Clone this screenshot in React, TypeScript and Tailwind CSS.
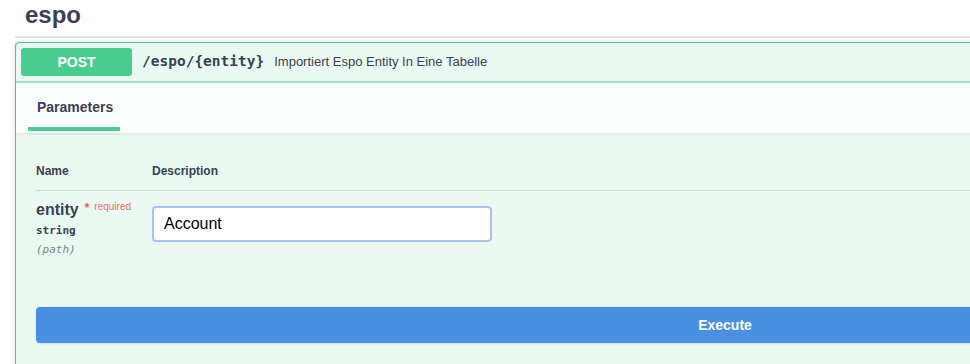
import React from "react";

const sans = { fontFamily: '"Liberation Sans", Arial, sans-serif' };

function ParamRow() {
  return (
    <div className="flex">
      <div className="w-[116px] pt-[9px]">
        <div className="flex items-start text-[#3b4151]">
          <span className="text-[16px] leading-[20px] font-bold">entity</span>
          <span className="ml-[6px] text-[12px] leading-[12px] text-[#f35b5b] font-bold mt-[2px]">*</span>
          <span className="ml-[5px] text-[10px] leading-[12px] text-[#f26a6a] mt-[1px]">required</span>
        </div>
        <div className="mt-[2px] text-[11px] leading-[18px] font-bold text-[#3b4151] font-['DejaVu_Sans_Mono',monospace]">
          string
        </div>
        <div className="mt-[1px] text-[11px] leading-[18px] italic text-[#808080] font-['DejaVu_Sans_Mono',monospace]">
          (path)
        </div>
      </div>
      <div className="pt-[15px]">
        <input
          defaultValue="Account"
          className="w-[340px] h-[36px] px-[10px] bg-white text-black text-[16px] rounded-[4px] border-2 border-[#a8c3f1] outline-none"
          style={sans}
        />
      </div>
    </div>
  );
}

export default function App() {
  return (
    <div className="w-full h-[364px] overflow-hidden bg-white" style={sans}>
      <div className="w-[1450px] px-[15px]">
        {/* Tag heading */}
        <div className="border-b-2 border-[#e2e3e5] pl-[10px] pt-[3px] pb-[9px]">
          <h2 className="text-[24px] leading-[24px] font-bold text-[#3b4151]">espo</h2>
        </div>

        {/* Operation block */}
        <div className="mt-[4px] border border-[#49cc90] bg-[#ebf9f3] rounded-[4px] shadow-[0_0_3px_rgba(0,0,0,0.19)]">
          {/* Summary */}
          <div className="flex items-center p-[5px] border-b-2 border-[#9fe2c3]">
            <div className="w-[111px] h-[28px] flex items-center justify-center rounded-[3px] bg-[#49cc90] text-white text-[14px] font-bold">
              POST
            </div>
            <span className="ml-[10px] text-[14.5px] font-bold text-[#3b4151] font-['DejaVu_Sans_Mono',monospace]">
              /espo/&#123;entity&#125;
            </span>
            <span className="ml-[10px] text-[13px] text-[#3b4151]">
              Importiert Espo Entity In Eine Tabelle
            </span>
          </div>

          {/* Section header */}
          <div className="h-[50px] bg-[#fbfefd] shadow-[0_1px_2px_rgba(0,0,0,0.1)] pl-[12px] flex items-end">
            <div className="relative pb-[2px]">
              <div className="px-[9px] pb-[12px] text-[14px] leading-[16px] font-bold text-[#3b4151]">
                Parameters
              </div>
              <div className="h-[4px] w-[92px] bg-[#49cc90] rounded-[1px]" />
            </div>
          </div>

          {/* Parameters table */}
          <div className="px-[20px]">
            <div className="flex pt-[30px] pb-[11px] border-b border-[#d3dad6] text-[12px] leading-[16px] font-bold text-[#3b4151]">
              <div className="w-[116px]">Name</div>
              <div>Description</div>
            </div>
            <ParamRow />
          </div>

          {/* Execute */}
          <div className="px-[20px] pt-[48px] pb-[40px]">
            <button className="w-full h-[36px] rounded-[4px] bg-[#4990e2] text-white text-[14px] font-bold shadow-[0_1px_2px_rgba(0,0,0,0.1)]">
              Execute
            </button>
          </div>
        </div>
      </div>
    </div>
  );
}
